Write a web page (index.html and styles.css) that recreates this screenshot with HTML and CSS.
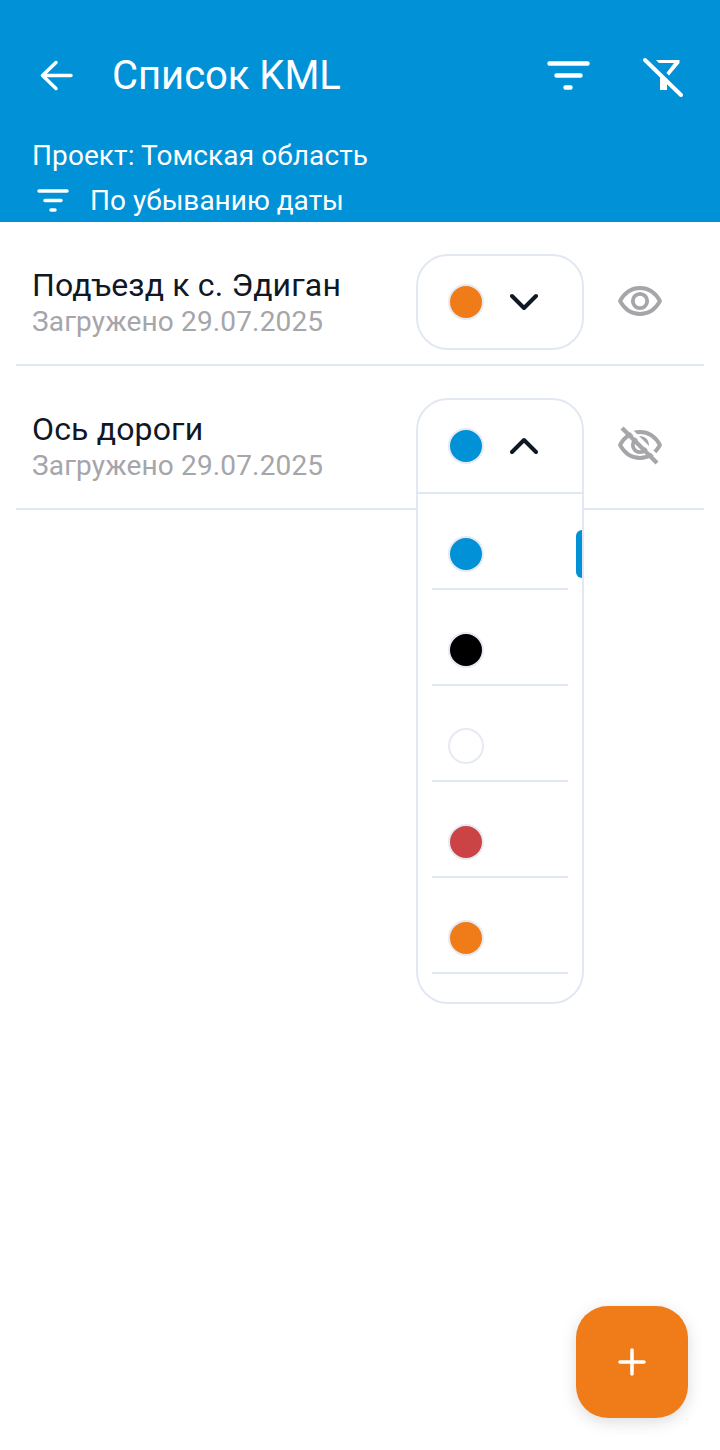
FILE: index.html
```html
<!DOCTYPE html>
<html lang="ru">
<head>
<meta charset="utf-8">
<title>Список KML</title>
<link rel="stylesheet" href="styles.css">
</head>
<body>
<div class="screen">
  <header class="header">
    <div class="toolbar">
      <button class="icon-btn back" aria-label="Назад">
        <svg width="48" height="48" viewBox="0 0 48 48" fill="none" stroke="#fff" stroke-width="3.500" stroke-linecap="round" stroke-linejoin="round"><path d="M39 23.500H11M24 10.500 10.500 23.500 24 36.500"/></svg>
      </button>
      <h1 class="title">Список KML</h1>
      <button class="icon-btn filter" aria-label="Фильтр">
        <svg width="48" height="48" viewBox="0 0 48 48" fill="none" stroke="#fff" stroke-width="4.500" stroke-linecap="round"><path d="M5.500 11.500h38M12.500 23.500h24M21.500 35.500h5"/></svg>
      </button>
      <button class="icon-btn clear" aria-label="Сбросить фильтр">
        <svg width="48" height="48" viewBox="0 0 48 48" fill="none"><path d="M17 8h23.500v3L30 23.500l-2.600-2.400L35 11H20z M21 24l7 7v7h-7z" fill="#fff"/><path d="M6 8 42 43" stroke="#fff" stroke-width="4" stroke-linecap="round"/></svg>
      </button>
    </div>
    <p class="project">Проект: Томская область</p>
    <div class="sort">
      <svg class="sort-icon" width="34" height="26" viewBox="0 0 34 26" fill="none" stroke="#fff" stroke-width="3.500" stroke-linecap="round"><path d="M3 3h28M9 12.500h16M15 22h4"/></svg>
      <span>По убыванию даты</span>
    </div>
  </header>

  <main class="list">
    <section class="row">
      <div class="info">
        <div class="name">Подъезд к с. Эдиган</div>
        <div class="date">Загружено 29.07.2025</div>
      </div>
      <div class="picker">
        <div class="select closed">
          <div class="select-head">
            <span class="swatch orange"></span>
            <svg class="chevron" width="28" height="18" viewBox="0 0 28 18" fill="none" stroke="#0f1824" stroke-width="4" stroke-linecap="round" stroke-linejoin="round"><path d="M2 3l12 12L26 3"/></svg>
          </div>
        </div>
      </div>
      <button class="icon-btn eye" aria-label="Скрыть">
        <svg width="48" height="48" viewBox="0 0 48 48" fill="none" stroke="#a5a5aa" stroke-width="3.800"><path d="M4 24C9 15 15.500 11 24 11S39 15 44 24C39 33 32.500 37 24 37S9 33 4 24z" stroke-linejoin="round"/><circle cx="24" cy="24" r="7.200"/></svg>
      </button>
    </section>

    <section class="row">
      <div class="info">
        <div class="name">Ось дороги</div>
        <div class="date">Загружено 29.07.2025</div>
      </div>
      <div class="picker">
        <div class="select open">
          <div class="select-head">
            <span class="swatch blue"></span>
            <svg class="chevron" width="28" height="18" viewBox="0 0 28 18" fill="none" stroke="#0f1824" stroke-width="4" stroke-linecap="round" stroke-linejoin="round"><path d="M2 15 14 3l12 12"/></svg>
          </div>
          <div class="options">
            <div class="option"><span class="swatch blue"></span></div>
            <div class="option"><span class="swatch black"></span></div>
            <div class="option"><span class="swatch white"></span></div>
            <div class="option"><span class="swatch red"></span></div>
            <div class="option"><span class="swatch orange"></span></div>
            <span class="scrollbar"></span>
          </div>
        </div>
      </div>
      <button class="icon-btn eye" aria-label="Показать">
        <svg width="48" height="48" viewBox="0 0 48 48" fill="none" stroke="#a5a5aa" stroke-width="3.800"><path d="M4 24C9 15 15.500 11 24 11S39 15 44 24C39 33 32.500 37 24 37S9 33 4 24z" stroke-linejoin="round"/><circle cx="24" cy="24" r="7.200"/><path d="M9 3.500l36 36" stroke="#fff" stroke-width="3.500"/><path d="M6 7l35 35" stroke-width="4.200"/></svg>
      </button>
    </section>
  </main>

  <button class="fab" aria-label="Добавить">
    <svg width="32" height="32" viewBox="0 0 32 32" fill="none" stroke="#fff" stroke-width="3.500" stroke-linecap="round"><path d="M16 4v24M4 16h24"/></svg>
  </button>
</div>
</body>
</html>
```
FILE: styles.css
```css
* { box-sizing: border-box; }
html, body { margin: 0; padding: 0; }
body { background: #fff; font-family: Roboto, "Noto Sans", sans-serif; }
.screen { position: relative; width: 720px; height: 1450px; overflow: hidden; background: #fff; }
button { border: 0; padding: 0; background: none; font: inherit; }

.header { height: 222px; background: #0091d7; color: #fff; padding: 0 32px; overflow: hidden; }
.toolbar { display: flex; align-items: center; height: 48px; margin: 52px 0 0; }
.icon-btn { display: flex; flex: none; width: 48px; height: 48px; align-items: center; justify-content: center; }
.title { flex: 1; margin: 0 0 0 32px; font-size: 40px; font-weight: 400; line-height: 48px; letter-spacing: -.02px; }
.filter { margin-right: 47px; }
.clear { margin-right: 1px; }
.project { margin: 38px 0 0; font-size: 28px; line-height: 36px; letter-spacing: .09px; }
.sort { display: flex; align-items: center; gap: 20px; margin-top: 9px; font-size: 28px; line-height: 36px; padding-left: 4px; }

.list { padding: 0 16px; }
.row { display: flex; height: 144px; padding: 32px 0 0 16px; border-bottom: 2px solid #e2e8f3; }
.info { flex: 1; padding-top: 11px; }
.name { font-size: 32px; line-height: 40px; color: #0f1824; letter-spacing: .15px; }
.date { margin-top: 2px; font-size: 28px; line-height: 30px; color: #a5a5aa; letter-spacing: .15px; }
.picker { position: relative; flex: none; width: 168px; height: 96px; margin-right: 32px; }
.select { position: absolute; top: 0; left: 0; width: 168px; background: #fff; border: 2px solid #e2e8f3; border-radius: 32px; z-index: 2; }
.select.closed { height: 96px; }
.select.open { height: 606px; }
.select-head { display: flex; align-items: center; gap: 26px; height: 92px; padding-left: 30px; }
.open .select-head { height: 94px; border-bottom: 2px solid #e2e8f3; }
.eye { margin: 23px 40px 0 0; }

.swatch { display: block; flex: none; width: 36px; height: 36px; border-radius: 50%; border: 2px solid #e6eaf3; }
.orange { background: #ef7c18; }
.blue { background: #0091d7; }
.black { background: #000; }
.white { background: #fff; }
.red { background: #cc4345; }

.options { position: relative; padding: 0 14px; }
.option { display: flex; align-items: center; height: 96px; padding: 26px 0 0 16px; border-bottom: 2px solid #e2e8f3; }
.scrollbar { position: absolute; top: 36px; right: 0; width: 6px; height: 48px; background: #0091d7; border-radius: 8px 0 0 8px; }

.fab { position: absolute; left: 576px; top: 1306px; display: flex; width: 112px; height: 112px; align-items: center; justify-content: center; background: #ef7c18; border-radius: 32px; box-shadow: 0 4px 16px rgba(0,0,0,.14); }
```
